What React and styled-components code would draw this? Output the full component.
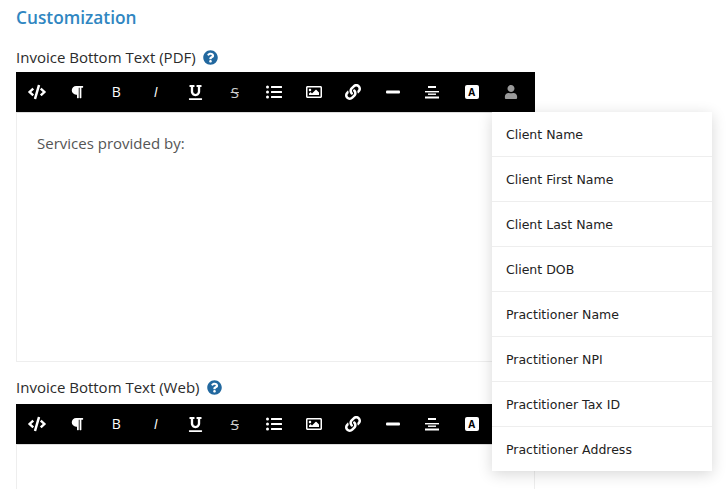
import styled, { createGlobalStyle } from 'styled-components'
import {
  FaCode, FaParagraph, FaUnderline, FaListUl,
  FaRegImage, FaLink, FaUser, FaQuestionCircle,
} from 'react-icons/fa'

const GlobalStyle = createGlobalStyle`
  html, body {
    margin: 0;
    height: 489px;
    overflow: hidden;
    background: #fff;
    font-family: "Open Sans", "Liberation Sans", sans-serif;
  }
`

const AlignIcon = () => (
  <svg width="14" height="14" viewBox="0 0 14 14" fill="#fff">
    <rect x="3" y="1" width="8" height="2" />
    <rect x="0" y="6" width="14" height="1.4" />
    <rect x="3" y="8.5" width="8" height="1.4" />
    <rect x="0" y="11.5" width="14" height="2" />
  </svg>
)

const DashIcon = () => (
  <svg width="14" height="4" viewBox="0 0 14 4" fill="#fff">
    <rect width="14" height="3" y="0.5" rx="1" />
  </svg>
)

const TOOLS = [
  { Icon: FaCode, size: 18 },
  { Icon: FaParagraph, size: 14 },
  { text: 'B', weight: 500, fs: 14 },
  { text: 'I', italic: true, fs: 14 },
  { Icon: FaUnderline, size: 15 },
  { text: 'S', strike: true, fs: 15, color: '#ccc' },
  { Icon: FaListUl, size: 16 },
  { Icon: FaRegImage, size: 16 },
  { Icon: FaLink, size: 16 },
  { Draw: DashIcon },
  { Draw: AlignIcon },
  { badge: true },
  { Icon: FaUser, size: 14, color: '#999' },
]

const FIELDS = [
  'Client Name',
  'Client First Name',
  'Client Last Name',
  'Client DOB',
  'Practitioner Name',
  'Practitioner NPI',
  'Practitioner Tax ID',
  'Practitioner Address',
]

const Toolbar = () => (
  <Tools>
    {TOOLS.map(({ Icon, Draw, size, color, badge, text, fs, weight, italic, strike }, i) => (
      <Tool key={i} $color={color}>
        {badge && <Badge>A</Badge>}
        {Icon && <Icon size={size} />}
        {Draw && <Draw />}
        {text && (
          <Letter $fs={fs} $weight={weight} $italic={italic} $strike={strike}>
            {text}
          </Letter>
        )}
      </Tool>
    ))}
  </Tools>
)

const App = () => (
  <Page>
    <GlobalStyle />
    <Title>Customization</Title>
    <Label $top={16} $bottom={3}>
      Invoice Bottom Text (PDF) <FaQuestionCircle size={15} color="#22689f" />
    </Label>
    <Toolbar />
    <Editor $height={250}>
      <Body>Services provided by:</Body>
    </Editor>
    <Label $top={13} $bottom={5}>
      Invoice Bottom Text (Web) <FaQuestionCircle size={15} color="#22689f" />
    </Label>
    <Toolbar />
    <Editor $height={60} />
    <Menu>
      {FIELDS.map((f) => (
        <MenuItem key={f}>{f}</MenuItem>
      ))}
    </Menu>
  </Page>
)

export default App

const Page = styled.div`
  position: relative;
  width: 726px;
  height: 489px;
  overflow: hidden;
  box-sizing: border-box;
  padding: 7px 0 0 16px;
`

const Title = styled.h2`
  margin: 0;
  font-size: 17.3px;
  line-height: 22px;
  font-weight: 600;
  color: #2f86c1;
`

const Label = styled.div`
  display: flex;
  align-items: center;
  gap: 7px;
  margin: ${(p) => p.$top}px 0 ${(p) => p.$bottom}px;
  height: 24px;
  font-size: 15px;
  color: #2b2b2b;
`

const Tools = styled.div`
  display: flex;
  width: 519px;
  height: 40px;
  box-sizing: border-box;
  padding-left: 1.5px;
  background: #000;
`

const Tool = styled.div`
  flex: 0 0 39.5px;
  display: flex;
  align-items: center;
  justify-content: center;
  color: ${(p) => p.$color || '#fff'};
`

const Letter = styled.span`
  font-size: ${(p) => p.$fs}px;
  font-weight: ${(p) => p.$weight || 400};
  font-style: ${(p) => (p.$italic ? 'italic' : 'normal')};
  text-decoration: ${(p) => (p.$strike ? 'line-through' : 'none')};
  line-height: 1;
`

const Badge = styled.span`
  display: flex;
  align-items: center;
  justify-content: center;
  width: 14px;
  height: 14px;
  border-radius: 2px;
  background: #fff;
  color: #000;
  font-size: 10px;
  font-weight: 700;
`

const Editor = styled.div`
  width: 519px;
  height: ${(p) => p.$height}px;
  box-sizing: border-box;
  border: 1px solid #eee;
  border-top-color: #ddd;
`

const Body = styled.p`
  margin: 0;
  padding: 19px 20px;
  font-size: 15px;
  line-height: 22px;
  color: #555;
`

const Menu = styled.div`
  position: absolute;
  left: 492px;
  top: 112px;
  width: 220px;
  background: #fff;
  box-shadow: 0 3px 14px rgba(0, 0, 0, 0.16);
`

const MenuItem = styled.div`
  height: 45px;
  box-sizing: border-box;
  padding: 0 0 0 14px;
  display: flex;
  align-items: center;
  font-family: "DejaVu Sans", sans-serif;
  font-size: 12.5px;
  color: #222;
  border-bottom: 1px solid #eee;
  &:last-child {
    border-bottom: 0;
    height: 44px;
  }
`
